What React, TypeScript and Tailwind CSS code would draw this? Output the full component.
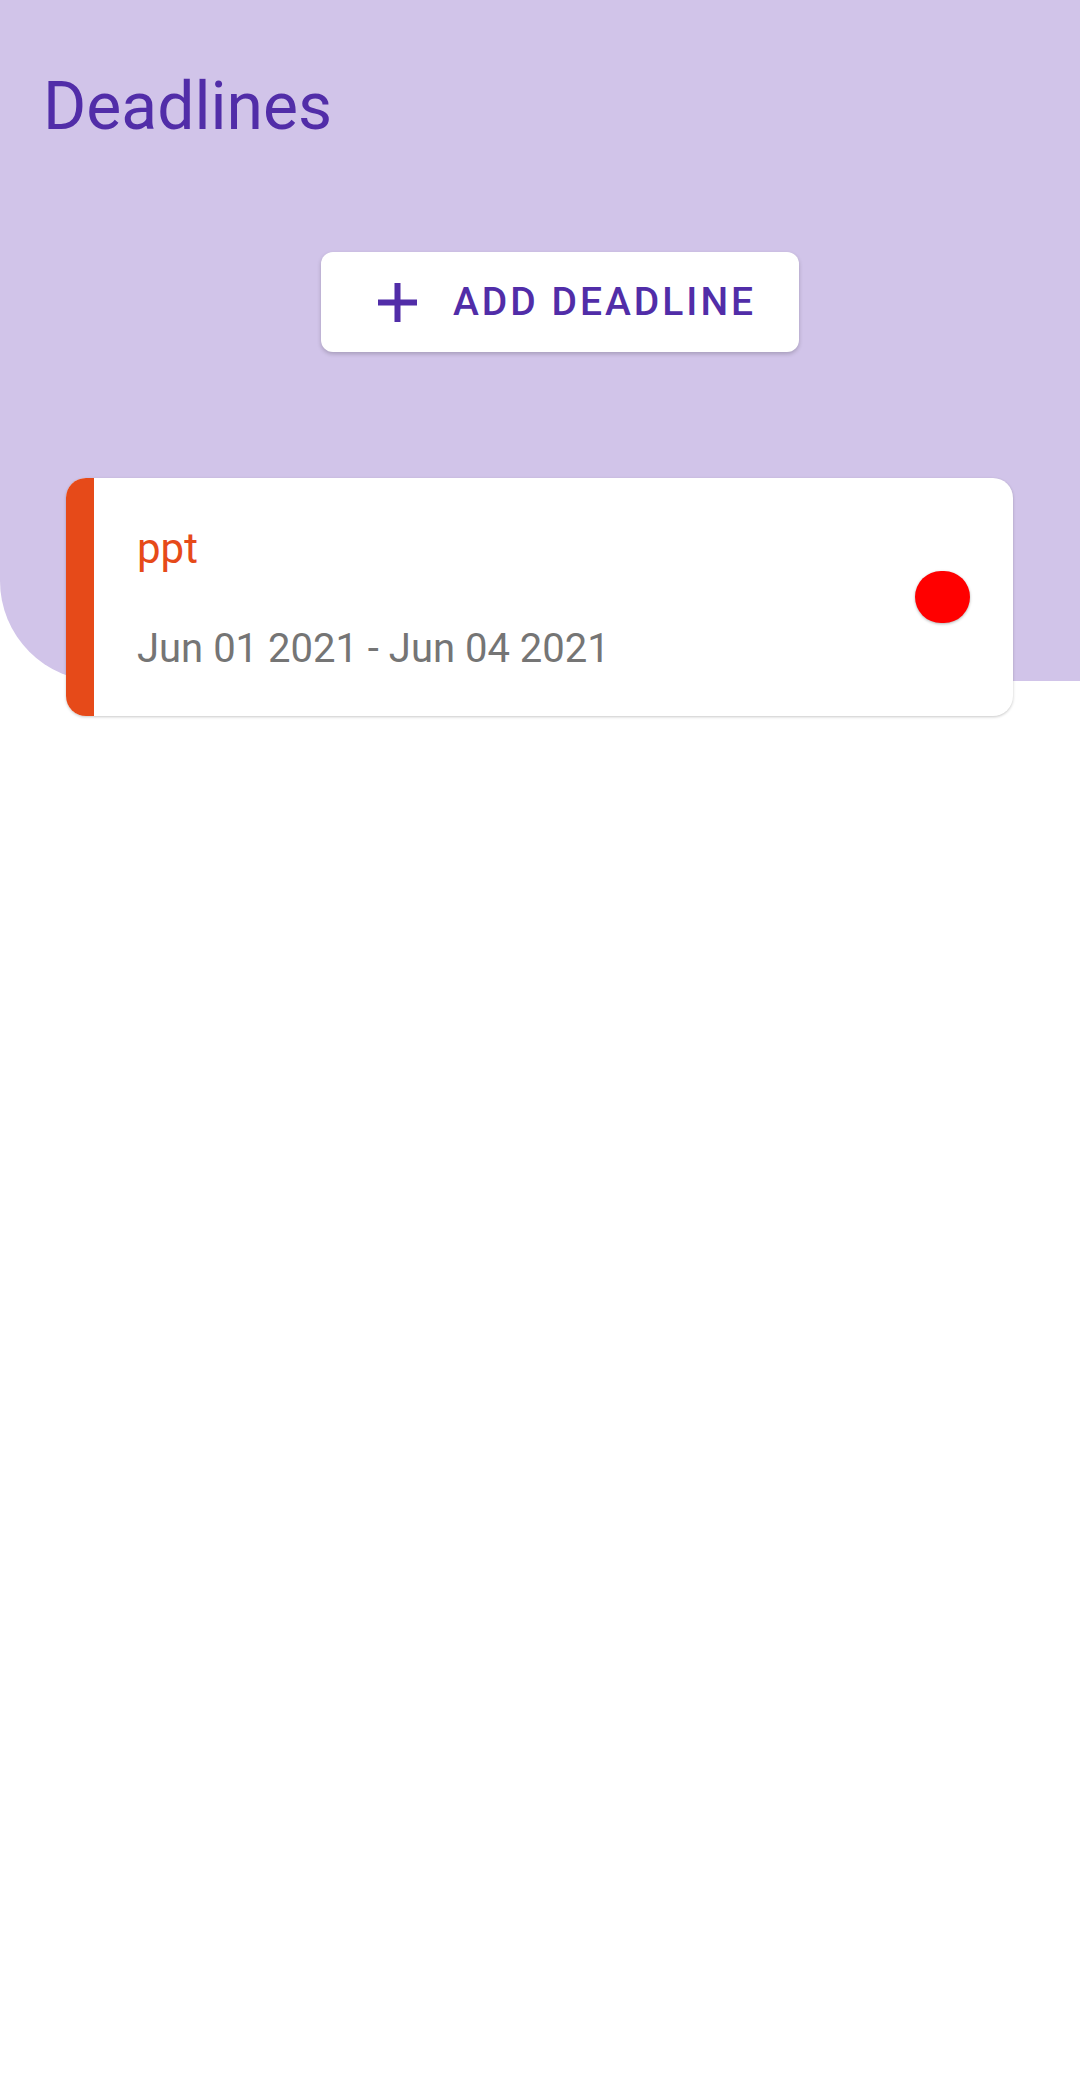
export default function App() {
  return (
    <div
      className="min-h-screen w-full bg-white"
      style={{ fontFamily: "Roboto, 'Noto Sans', sans-serif" }}
    >
      {/* Header */}
      <div className="h-[681px] rounded-bl-[100px] bg-[#D1C4E9] pt-[74px]">
        <h1 className="ml-[43px] text-[66px] leading-[66px] font-normal text-[#512DA8]">
          Deadlines
        </h1>
        <button className="mt-[112px] ml-[321px] flex h-[100px] w-[478px] items-center rounded-[12px] bg-white pl-[57px] shadow-[0_2px_4px_rgba(0,0,0,0.2)]">
          <svg width="39" height="39" viewBox="0 0 39 39">
            <path
              d="M19.5 0 V39 M0 19.5 H39"
              stroke="#512DA8"
              strokeWidth="6"
              fill="none"
            />
          </svg>
          <span className="ml-[36px] text-[39px] leading-none font-medium tracking-[3px] text-[#512DA8]">
            ADD DEADLINE
          </span>
        </button>
      </div>

      {/* Deadline card */}
      <div className="relative -mt-[203px] ml-[66px] flex w-[947px] overflow-hidden rounded-[20px] bg-white shadow-[0_1px_3px_rgba(0,0,0,0.22)]">
        <div className="w-[28px] bg-[#E64A19]" />
        <div className="flex flex-1 items-center justify-between pl-[43px] pr-[43px]">
          <div className="pt-[45px] pb-[44px]">
            <div className="text-[42px] leading-[52px] text-[#E64A19]">ppt</div>
            <div className="mt-[51px] text-[40px] leading-[46px] text-[#757575]">
              Jun 01 2021 - Jun 04 2021
            </div>
          </div>
          <div className="h-[52px] w-[55px] rounded-full bg-[#FF0000] shadow-[0_1px_3px_rgba(0,0,0,0.3)]" />
        </div>
      </div>
    </div>
  );
}
